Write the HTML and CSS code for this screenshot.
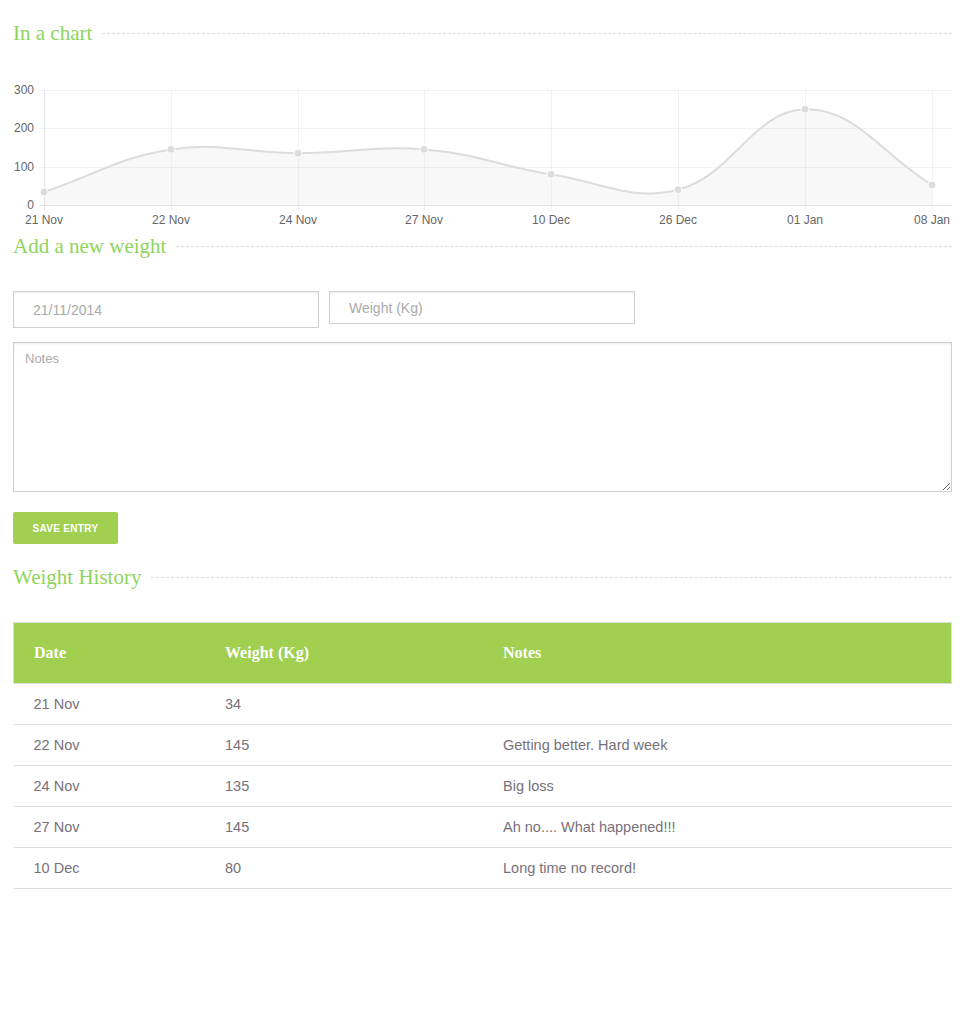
FILE: index.html
```html
<!DOCTYPE html>
<html>
<head>
<meta charset="utf-8">
<link rel="stylesheet" href="styles.css">
</head>
<body>
<div class="page">
  <h2 class="section-title"><span>In a chart</span></h2>
  <svg class="chart" width="939" height="148" viewBox="13 80 939 148" xmlns="http://www.w3.org/2000/svg">
    <g class="grid">
      <line x1="39" y1="90.5" x2="952" y2="90.5"/>
      <line x1="39" y1="128.5" x2="952" y2="128.5"/>
      <line x1="39" y1="167.5" x2="952" y2="167.5"/>
      <line x1="171.5" y1="90" x2="171.5" y2="210"/>
      <line x1="298.5" y1="90" x2="298.5" y2="210"/>
      <line x1="424.5" y1="90" x2="424.5" y2="210"/>
      <line x1="551.5" y1="90" x2="551.5" y2="210"/>
      <line x1="678.5" y1="90" x2="678.5" y2="210"/>
      <line x1="805.5" y1="90" x2="805.5" y2="210"/>
      <line x1="932.5" y1="90" x2="932.5" y2="210"/>
    </g>
    <g class="axis">
      <line x1="44.5" y1="90" x2="44.5" y2="210"/>
      <line x1="39" y1="205.5" x2="952" y2="205.5"/>
    </g>
    <path class="area" d="M44,192 C94.8,175 118.9,157.4 171,149.4 C220.5,141.9 247.2,153.25 298,153.25 C348.4,153.25 374.1,145.4 424,149.4 C475.3,153.5 499.9,166.2 551,174.3 C601.5,182.3 631.3,201.7 678,189.7 C732.9,175.6 753.7,110.4 805,109.2 C855.3,108.05 881.2,154 932,184.9 L932,205 L44,205 Z"/>
    <path class="line" d="M44,192 C94.8,175 118.9,157.4 171,149.4 C220.5,141.9 247.2,153.25 298,153.25 C348.4,153.25 374.1,145.4 424,149.4 C475.3,153.5 499.9,166.2 551,174.3 C601.5,182.3 631.3,201.7 678,189.7 C732.9,175.6 753.7,110.4 805,109.2 C855.3,108.05 881.2,154 932,184.9"/>
    <g class="dots">
      <circle cx="44" cy="192" r="4"/>
      <circle cx="171" cy="149.4" r="4"/>
      <circle cx="298" cy="153.25" r="4"/>
      <circle cx="424" cy="149.4" r="4"/>
      <circle cx="551" cy="174.3" r="4"/>
      <circle cx="678" cy="189.7" r="4"/>
      <circle cx="805" cy="109.2" r="4"/>
      <circle cx="932" cy="184.9" r="4"/>
    </g>
    <g class="ylabels">
      <text x="34" y="94">300</text>
      <text x="34" y="132">200</text>
      <text x="34" y="171">100</text>
      <text x="34" y="209">0</text>
    </g>
    <g class="xlabels">
      <text x="44" y="224">21 Nov</text>
      <text x="171" y="224">22 Nov</text>
      <text x="298" y="224">24 Nov</text>
      <text x="424" y="224">27 Nov</text>
      <text x="551" y="224">10 Dec</text>
      <text x="678" y="224">26 Dec</text>
      <text x="805" y="224">01 Jan</text>
      <text x="932" y="224">08 Jan</text>
    </g>
  </svg>

  <h2 class="section-title title-add"><span>Add a new weight</span></h2>
  <form class="entry-form">
    <div class="input-row">
      <input class="field field-date" type="text" value="21/11/2014">
      <input class="field field-weight" type="text" placeholder="Weight (Kg)">
    </div>
    <textarea class="notes" placeholder="Notes"></textarea>
    <button class="save-btn" type="button">Save Entry</button>
  </form>

  <h2 class="section-title title-history"><span>Weight History</span></h2>
  <table class="history">
    <thead>
      <tr><th class="c-date">Date</th><th class="c-weight">Weight (Kg)</th><th>Notes</th></tr>
    </thead>
    <tbody>
      <tr><td>21 Nov</td><td>34</td><td></td></tr>
      <tr><td>22 Nov</td><td>145</td><td>Getting better. Hard week</td></tr>
      <tr><td>24 Nov</td><td>135</td><td>Big loss</td></tr>
      <tr><td>27 Nov</td><td>145</td><td>Ah no.... What happened!!!</td></tr>
      <tr><td>10 Dec</td><td>80</td><td>Long time no record!</td></tr>
    </tbody>
  </table>
</div>
</body>
</html>
```

FILE: styles.css
```css
html, body {
  margin: 0;
  padding: 0;
  background: #fff;
}

.page {
  padding: 21px 11px 0 13px;
  font-family: "Liberation Sans", Arial, sans-serif;
}

.section-title {
  display: flex;
  align-items: center;
  gap: 10px;
  margin: 0;
  height: 24px;
  font-family: "Liberation Serif", "Times New Roman", serif;
  font-weight: normal;
  font-size: 21px;
  line-height: 24px;
  color: #8fd45c;
}

.section-title::after {
  content: "";
  flex: 1;
  border-top: 1px dashed #dcdcdc;
  margin-top: 1px;
}

.chart {
  display: block;
  margin-top: 35px;
}

.grid line {
  stroke: rgba(0, 0, 0, 0.05);
  stroke-width: 1;
}

.axis line {
  stroke: rgba(0, 0, 0, 0.1);
  stroke-width: 1;
}

.area {
  fill: rgba(220, 220, 220, 0.2);
}

.line {
  fill: none;
  stroke: #dcdcdc;
  stroke-width: 2;
}

.dots circle {
  fill: #dcdcdc;
  stroke: #fff;
  stroke-width: 1;
}

.ylabels text {
  font-family: "Liberation Sans", Arial, sans-serif;
  font-size: 12px;
  fill: #666;
  text-anchor: end;
}

.xlabels text {
  font-family: "Liberation Sans", Arial, sans-serif;
  font-size: 12px;
  fill: #666;
  text-anchor: middle;
}

.title-add {
  margin-top: 6px;
}

.entry-form {
  display: flex;
  flex-direction: column;
  align-items: flex-start;
  margin: 33px 0 0;
}

.input-row {
  display: flex;
  align-items: flex-start;
  gap: 10px;
}

.field {
  box-sizing: border-box;
  width: 306px;
  margin: 0;
  border: 1px solid #cfcfcf;
  box-shadow: inset 0 1px 2px rgba(0, 0, 0, 0.08);
  border-radius: 0;
  font-family: "Liberation Sans", Arial, sans-serif;
  font-size: 14px;
  color: #aaa;
  padding: 0 19px;
  outline: none;
}

.field-date {
  height: 37px;
}

.field-weight {
  height: 33px;
}

.field::placeholder,
.notes::placeholder {
  color: #aaa;
}

.notes {
  box-sizing: border-box;
  display: block;
  width: 939px;
  height: 150px;
  margin: 14px 0 0;
  padding: 8px 11px;
  border: 1px solid #cfcfcf;
  box-shadow: inset 0 1px 2px rgba(0, 0, 0, 0.08);
  font-family: "Liberation Sans", Arial, sans-serif;
  font-size: 13px;
  color: #aaa;
  outline: none;
}

.save-btn {
  margin-top: 20px;
  width: 105px;
  height: 32px;
  border: none;
  border-radius: 2px;
  background: #a1cf4f;
  color: #fff;
  font-family: "Liberation Sans", Arial, sans-serif;
  font-weight: bold;
  font-size: 10px;
  letter-spacing: 0.3px;
  text-transform: uppercase;
  padding: 0;
  cursor: pointer;
}

.title-history {
  margin-top: 21px;
}

.history {
  margin-top: 33px;
  width: 939px;
  border-collapse: collapse;
  font-family: "Liberation Sans", Arial, sans-serif;
}

.history thead tr {
  background: #a1cf4f;
  border: 1px solid #dedede;
}

.history th {
  height: 60px;
  padding: 0 20px;
  text-align: left;
  font-family: "Liberation Serif", "Times New Roman", serif;
  font-weight: bold;
  font-size: 16px;
  color: #fff;
}

.history .c-date {
  width: 151px;
}

.history .c-weight {
  width: 238px;
}

.history td {
  height: 40px;
  padding: 0 20px;
  border-bottom: 1px solid #dedede;
  font-size: 14.5px;
  color: #78717a;
}
```
